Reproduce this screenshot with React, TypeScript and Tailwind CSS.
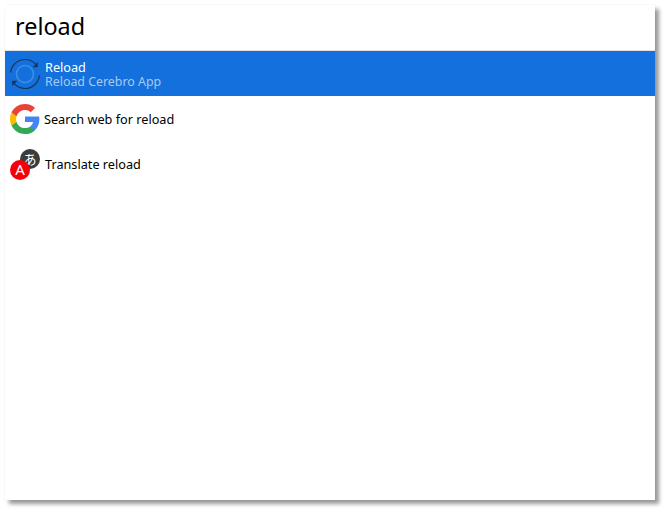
import { ReactNode } from "react";

function ReloadIcon() {
  return (
    <svg width="32" height="32" viewBox="0 0 32 32" fill="none">
      <circle cx="16" cy="16" r="8.5" stroke="#3d8fe2" strokeWidth="1.6" />
      <path d="M1.600 14.500C2.300 7.200 8.500 1.500 16 1.500c4.300 0 8.100 1.800 10.800 4.800" stroke="#1c3556" strokeWidth="1.200" />
      <path d="M30.400 17.500C29.700 24.800 23.500 30.500 16 30.500c-4.300 0-8.100-1.800-10.800-4.800" stroke="#1c3556" strokeWidth="1.200" />
      <path d="M28.800 4v5.300h-5.300z" fill="#1c3556" />
      <path d="M3.200 28v-5.300h5.300z" fill="#1c3556" />
    </svg>
  );
}

function GoogleIcon() {
  return (
    <svg width="30" height="30" viewBox="0 0 48 48">
      <path fill="#4285F4" d="M47 24.500c0-1.600-.1-3.200-.4-4.700H24v9h13c-.6 3-2.300 5.500-4.800 7.200v6h7.700C44.400 37.800 47 31.700 47 24.500z" />
      <path fill="#34A853" d="M24 48c6.500 0 11.900-2.100 15.900-5.800l-7.700-6c-2.200 1.400-4.900 2.300-8.200 2.300-6.300 0-11.600-4.200-13.500-9.900H2.500v6.200C6.400 42.500 14.600 48 24 48z" />
      <path fill="#FBBC05" d="M10.500 28.600c-.5-1.400-.8-3-.8-4.600s.3-3.200.8-4.600v-6.200H2.500C.9 16.400 0 20.100 0 24s.9 7.600 2.500 10.800z" />
      <path fill="#EA4335" d="M24 9.500c3.500 0 6.700 1.200 9.200 3.600l6.900-6.900C35.900 2.400 30.500 0 24 0 14.600 0 6.400 5.500 2.500 13.200l8 6.200C12.400 13.700 17.700 9.500 24 9.500z" />
    </svg>
  );
}

function TranslateIcon() {
  return (
    <div className="relative w-[32px] h-[32px]">
      <div className="absolute right-[1px] top-[1px] w-[20px] h-[20px] rounded-full bg-[#3c3c3c] flex items-center justify-center text-white text-[13px] leading-none font-['Noto_Sans_CJK_JP',sans-serif]">
        あ
      </div>
      <div className="absolute left-[1px] bottom-0 w-[20px] h-[20px] rounded-full bg-[#f5000a] flex items-center justify-center text-white text-[15px] leading-none">
        A
      </div>
    </div>
  );
}

function Row({
  icon,
  title,
  subtitle,
  selected,
  tight,
}: {
  icon: ReactNode;
  title: string;
  subtitle?: string;
  selected?: boolean;
  tight?: boolean;
}) {
  return (
    <div
      className={
        "h-[45px] flex items-center pl-[4px] " +
        (tight ? "gap-[3px] " : "gap-[4px] ") +
        (selected ? "bg-[#1470dc] text-white" : "text-black")
      }
    >
      <div className="w-[32px] h-[32px] flex items-center justify-center shrink-0">{icon}</div>
      <div className={"flex flex-col " + (subtitle ? "pt-[2px]" : "")}>
        <div className="leading-[14px] text-[12.7px]">{title}</div>
        {subtitle && <div className="leading-[14px] pt-px text-[12.4px] text-[#a9c9ef]">{subtitle}</div>}
      </div>
    </div>
  );
}

export default function App() {
  return (
    <div className="w-[664px] h-[509px] bg-white pt-[5px] pl-[5px] font-['Noto_Sans',sans-serif]">
      <div className="w-[650px] h-[495px] bg-white shadow-[4px_4px_4px_0px_rgba(0,0,0,0.4),0_0_1px_0px_rgba(0,0,0,0.12)]">
        <div className="h-[46px] border-b border-[#e0e0e0] pl-[10px] pb-[1px] flex items-center text-[23.4px] text-black">
          reload
        </div>
        <Row icon={<ReloadIcon />} title="Reload" subtitle="Reload Cerebro App" selected />
        <Row icon={<GoogleIcon />} title="Search web for reload" tight />
        <Row icon={<TranslateIcon />} title="Translate reload" />
      </div>
    </div>
  );
}
